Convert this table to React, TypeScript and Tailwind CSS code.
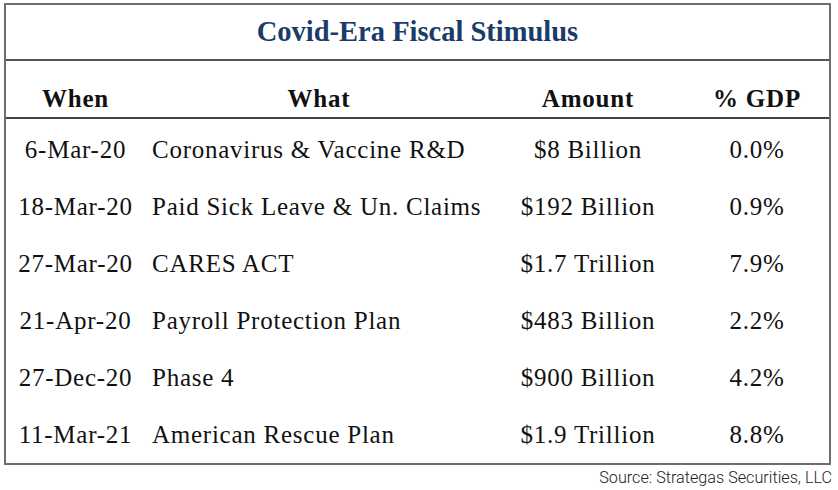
import React from "react";

const rows = [
  ["6-Mar-20", "Coronavirus & Vaccine R&D", "$8 Billion", "0.0%"],
  ["18-Mar-20", "Paid Sick Leave & Un. Claims", "$192 Billion", "0.9%"],
  ["27-Mar-20", "CARES ACT", "$1.7 Trillion", "7.9%"],
  ["21-Apr-20", "Payroll Protection Plan", "$483 Billion", "2.2%"],
  ["27-Dec-20", "Phase 4", "$900 Billion", "4.2%"],
  ["11-Mar-21", "American Rescue Plan", "$1.9 Trillion", "8.8%"],
];

export default function App() {
  return (
    <div className="w-[838px] h-[490px] bg-white" style={{ fontFamily: '"Liberation Serif", serif' }}>
      <div className="pt-[3px] pl-[4px]">
        <div className="w-[827px] h-[462px] border-2 border-[#6e6e6e] flex flex-col text-[#111]">
          <div className="h-[56px] flex items-center justify-center border-b-2 border-[#555]">
            <span className="text-[28.5px] font-bold text-[#1b3c68] leading-none">Covid-Era Fiscal Stimulus</span>
          </div>
          <div className="h-[58px] flex items-end pb-[6px] border-b-2 border-[#444] text-[25px] font-bold leading-none tracking-[0.8px]">
            <div className="w-[143px] text-center pr-[4px]">When</div>
            <div className="w-[344px] text-center pr-[4px]">What</div>
            <div className="w-[190px] text-center">Amount</div>
            <div className="flex-1 text-center pl-[2px]">% GDP</div>
          </div>
          <div className="flex-1 flex flex-col pt-[2px]">
            {rows.map((r, i) => (
              <div key={i} className="flex-1 flex items-center text-[25px] leading-none tracking-[0.75px]">
                <div className="w-[143px] text-center pr-[4px]">{r[0]}</div>
                <div className="w-[344px] pl-[3px]">{r[1]}</div>
                <div className="w-[190px] text-center">{r[2]}</div>
                <div className="flex-1 text-center pl-[2px]">{r[3]}</div>
              </div>
            ))}
          </div>
        </div>
        <div className="w-[828px] text-right text-[16.2px] text-[#222] mt-[2px] leading-[22px]" style={{ fontFamily: "Roboto, sans-serif", fontWeight: 300 }}>
          Source: Strategas Securities, LLC
        </div>
      </div>
    </div>
  );
}
